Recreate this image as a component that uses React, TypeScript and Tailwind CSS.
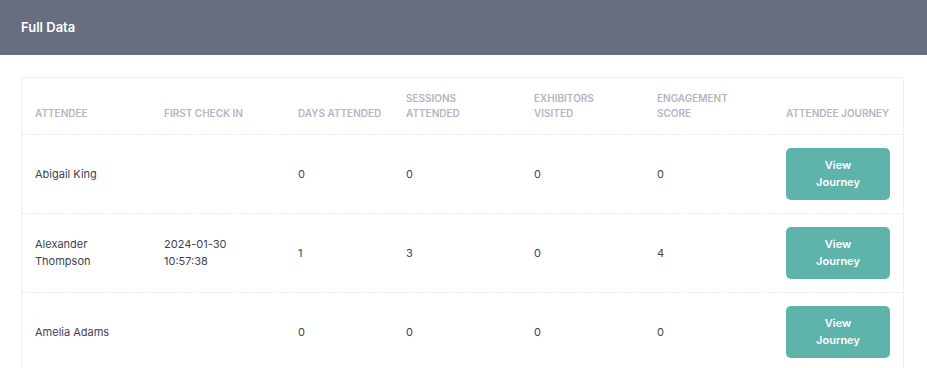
import React from 'react';

type Row = {
  name: string;
  checkIn: string;
  days: number;
  sessions: number;
  exhibitors: number;
  score: number;
};

const rows: Row[] = [
  { name: 'Abigail King', checkIn: '', days: 0, sessions: 0, exhibitors: 0, score: 0 },
  { name: 'Alexander Thompson', checkIn: '2024-01-30 10:57:38', days: 1, sessions: 3, exhibitors: 0, score: 4 },
  { name: 'Amelia Adams', checkIn: '', days: 0, sessions: 0, exhibitors: 0, score: 0 },
];

const headers = [
  { label: 'Attendee', w: 'w-[142px] pl-[13px] pr-[22px]' },
  { label: 'First Check In', w: 'w-[134px] pr-[30px]' },
  { label: 'Days Attended', w: 'w-[108px] pr-[22px]' },
  { label: 'Sessions Attended', w: 'w-[128px] pr-[22px]' },
  { label: 'Exhibitors Visited', w: 'w-[123px] pr-[22px]' },
  { label: 'Engagement Score', w: 'w-[129px] pr-[22px]' },
  { label: 'Attendee Journey', w: 'w-[117px] pr-0' },
];

export default function App() {
  return (
    <div className="min-h-screen bg-white font-['Inter',sans-serif]">
      <div className="h-[55px] bg-[#666e80] flex items-center px-[21px]">
        <h2 className="text-[13px] font-semibold text-white">Full Data</h2>
      </div>

      <div className="mt-[22px] ml-[21px] w-[883px] border border-[#eff0f4] border-b-0">
        <table className="w-full table-fixed border-collapse">
          <thead>
            <tr className="border-b border-dashed border-[#e9eaf0]">
              {headers.map((h) => (
                <th
                  key={h.label}
                  className={`${h.w} pt-[13px] pb-[13px] h-[56px] align-bottom text-left text-[10px] leading-[15px] font-semibold uppercase whitespace-normal text-[#b5b5c3]`}
                >
                  {h.label}
                </th>
              ))}
            </tr>
          </thead>
          <tbody>
            {rows.map((r) => (
              <tr key={r.name} className="border-b border-dashed border-[#e9eaf0] text-[11px] leading-[17px] text-[#3f4254]">
                <td className="pl-[13px] pr-[22px] h-[79px] align-middle">{r.name}</td>
                <td className="pr-[30px] align-middle">{r.checkIn}</td>
                <td className="pr-[22px] align-middle">{r.days}</td>
                <td className="pr-[22px] align-middle">{r.sessions}</td>
                <td className="pr-[22px] align-middle">{r.exhibitors}</td>
                <td className="pr-[22px] align-middle">{r.score}</td>
                <td className="align-middle">
                  <button className="w-[104px] h-[52px] rounded-[5px] bg-[#5eb4aa] text-white text-[11px] leading-[17px] font-semibold px-6">
                    View Journey
                  </button>
                </td>
              </tr>
            ))}
          </tbody>
        </table>
      </div>
    </div>
  );
}
